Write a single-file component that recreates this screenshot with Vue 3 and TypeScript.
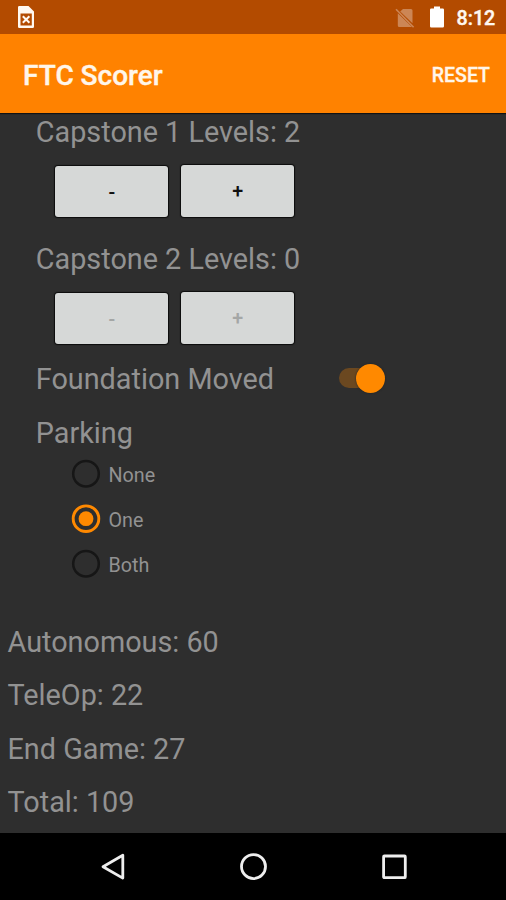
<script setup lang="ts">
import { computed, ref } from 'vue'

interface Capstone {
  id: number
  levels: number
  enabled: boolean
}

const capstones = ref<Capstone[]>([
  { id: 1, levels: 2, enabled: true },
  { id: 2, levels: 0, enabled: false },
])
const foundationMoved = ref(true)
const parkingOptions = ['None', 'One', 'Both']
const parking = ref('One')
const autonomous = ref(60)
const teleOp = ref(22)
const endGame = ref(27)

const totals = computed(() => [
  { label: 'Autonomous', value: autonomous.value },
  { label: 'TeleOp', value: teleOp.value },
  { label: 'End Game', value: endGame.value },
  { label: 'Total', value: autonomous.value + teleOp.value + endGame.value },
])

function step(item: Capstone, by: number) {
  item.levels = Math.max(0, item.levels + by)
}

function reset() {
  capstones.value.forEach((item) => (item.levels = 0))
  foundationMoved.value = false
  parking.value = 'None'
  autonomous.value = teleOp.value = endGame.value = 0
}
</script>

<template>
  <div class="screen">
    <div class="status">
      <svg class="sim" width="18" height="24" viewBox="0 0 18 24">
        <path fill="#fff8f0" fill-rule="evenodd" d="M2.3 1H11.5L17 6.5V21.7Q17 23 15.7 23H2.300Q1 23 1 21.700V2.300Q1 1 2.300 1ZM3.500 8.500V20.500H14.800V8.500Z" />
        <path stroke="#fff8f0" stroke-width="2" fill="none" d="M5.800 11.300l6.600 6.400M12.400 11.300l-6.600 6.400" />
      </svg>
      <span class="grow" />
      <svg class="nosim" width="20" height="22" viewBox="0 0 20 22">
        <path fill="#cc8655" d="M8 2H16Q17.500 2 17.500 3.500V16.200L5.200 4.400ZM2.800 6.200L17 20H4.300Q2.800 20 2.800 18.500Z" />
        <path stroke="#cc8655" stroke-width="1.600" d="M1 2.300L18.600 20.300" />
      </svg>
      <svg class="battery" width="16" height="24" viewBox="0 0 16 24">
        <path fill="#fff" d="M5 1.500H11V3.500H13.700Q15 3.500 15 4.800V21.200Q15 22.500 13.700 22.500H2.300Q1 22.500 1 21.200V4.800Q1 3.500 2.300 3.500H5Z" />
      </svg>
      <span class="clock">8:12</span>
    </div>

    <header class="toolbar">
      <h1 class="title">FTC Scorer</h1>
      <button class="reset" type="button" @click="reset">RESET</button>
    </header>

    <main class="content">
      <section v-for="item in capstones" :key="item.id" class="capstone">
        <div class="label">Capstone {{ item.id }} Levels: {{ item.levels }}</div>
        <div class="buttons">
          <button class="step" type="button" :disabled="!item.enabled" @click="step(item, -1)">-</button>
          <button class="step plus" type="button" :disabled="!item.enabled" @click="step(item, 1)">+</button>
        </div>
      </section>

      <div class="foundation">
        <span class="label">Foundation Moved</span>
        <button
          class="switch"
          :class="{ on: foundationMoved }"
          type="button"
          role="switch"
          :aria-checked="foundationMoved"
          @click="foundationMoved = !foundationMoved"
        >
          <span class="thumb" />
        </button>
      </div>

      <section class="parking">
        <div class="label">Parking</div>
        <div class="options">
          <div v-for="option in parkingOptions" :key="option" class="option" @click="parking = option">
            <svg class="radio" :class="{ on: parking === option }" width="30" height="30" viewBox="0 0 30 30">
              <circle class="ring" cx="15" cy="14.700" r="12.800" />
              <circle v-if="parking === option" class="dot" cx="15" cy="14.700" r="7.400" />
            </svg>
            <span class="choice">{{ option }}</span>
          </div>
        </div>
      </section>

      <section class="totals">
        <div v-for="row in totals" :key="row.label" class="label total">{{ row.label }}: {{ row.value }}</div>
      </section>
    </main>

    <nav class="navbar">
      <svg width="28" height="28" viewBox="0 0 28 28"><path d="M23.800 2.300V25.100L4 13.700Z" /></svg>
      <svg width="28" height="28" viewBox="0 0 28 28"><circle cx="14.500" cy="13.600" r="12" /></svg>
      <svg width="28" height="28" viewBox="0 0 28 28"><rect x="3.600" y="3" width="21.700" height="21.700" rx="0.800" /></svg>
    </nav>
  </div>
</template>

<style>
body {
  margin: 0;
  background: #2e2e2e;
}
</style>

<style scoped>
.screen {
  width: 506px;
  height: 900px;
  display: flex;
  flex-direction: column;
  overflow: hidden;
  background: #2e2e2e;
  font-family: Roboto, sans-serif;
  color: #929292;
}
button {
  border: 0;
  padding: 0;
  font-family: inherit;
}
svg {
  display: block;
  flex: none;
}
.status {
  height: 34px;
  flex: none;
  box-sizing: border-box;
  display: flex;
  align-items: flex-start;
  padding: 5px 9.500px 0 17px;
  background: #b34b00;
}
.grow {
  flex: 1;
}
.nosim {
  margin: 2px 14px 0 0;
}
.battery {
  margin-right: 12px;
}
.clock {
  width: 40px;
  font-size: 19.700px;
  font-weight: 500;
  line-height: 27px;
  white-space: nowrap;
  color: #fff8f0;
  -webkit-text-stroke: 0.4px #fff8f0;
}
.toolbar {
  height: 79px;
  flex: none;
  box-sizing: border-box;
  display: flex;
  align-items: center;
  justify-content: space-between;
  padding: 3px 16px 0 23px;
  background: #ff8200;
  box-shadow: 0 1px 1px #101214;
  z-index: 1;
}
.title {
  margin: 0;
  font-size: 28px;
  font-weight: 500;
  line-height: 33px;
  color: #fff6ea;
  -webkit-text-stroke: 0.4px #fff6ea;
}
.reset {
  background: none;
  font-size: 19.500px;
  font-weight: 500;
  color: #fff6ea;
  -webkit-text-stroke: 0.3px #fff6ea;
}
.content {
  height: 720px;
  flex: none;
  padding-top: 3px;
  box-sizing: border-box;
}
.label {
  font-size: 28.800px;
  line-height: 33px;
  white-space: nowrap;
}
.capstone {
  height: 127px;
  padding-left: 35.800px;
}
.buttons {
  display: flex;
  gap: 13px;
  padding: 17px 0 0 19.500px;
}
.step {
  width: 113px;
  height: 51px;
  padding-top: 1px;
  border-radius: 3px;
  background: #d6d8d7;
  box-shadow: 0 0 1px 1px #0c0c0c;
  font-size: 19.700px;
  font-weight: 500;
  color: #101010;
}
.step:disabled {
  color: #a4a6a5;
}
.plus {
  height: 52px;
  margin-top: -1px;
}
.foundation {
  height: 47px;
  display: flex;
  align-items: flex-start;
  justify-content: space-between;
  padding: 0 121px 0 35.800px;
  margin-top: -7px;
}
.switch {
  width: 46px;
  height: 30px;
  display: flex;
  align-items: center;
  background: linear-gradient(#555, #555) 0 50% / 36px 20px no-repeat;
  border-radius: 10px;
}
.switch.on {
  justify-content: flex-end;
  background: none;
}
.switch.on::before {
  content: '';
  width: 30px;
  height: 20px;
  margin-right: -13px;
  border-radius: 10px 0 0 10px;
  background: #6b4820;
}
.thumb {
  width: 29px;
  height: 29px;
  border-radius: 50%;
  background: #ff8900;
  box-shadow: 0 0 2px #1b2023;
}
.parking {
  height: 203px;
  padding: 7px 0 0 35.800px;
  box-sizing: border-box;
}
.options {
  padding: 1px 0 0 35.200px;
}
.option {
  height: 45px;
  display: flex;
  align-items: center;
  gap: 7.500px;
}
.ring {
  fill: none;
  stroke: #161616;
  stroke-width: 2.500;
}
.radio.on .ring {
  stroke: #ff8900;
  stroke-width: 2.900;
}
.dot {
  fill: #ff8900;
}
.choice {
  font-size: 19.700px;
  line-height: 24px;
  padding-top: 4px;
}
.totals {
  padding: 13px 0 0 7.500px;
}
.total {
  height: 53.400px;
}
.navbar {
  flex: 1;
  display: flex;
  justify-content: center;
  align-items: center;
  gap: 112.500px;
  background: #000;
}
.navbar svg {
  fill: none;
  stroke: #eee;
  stroke-width: 2.800;
  stroke-linejoin: round;
}
</style>
